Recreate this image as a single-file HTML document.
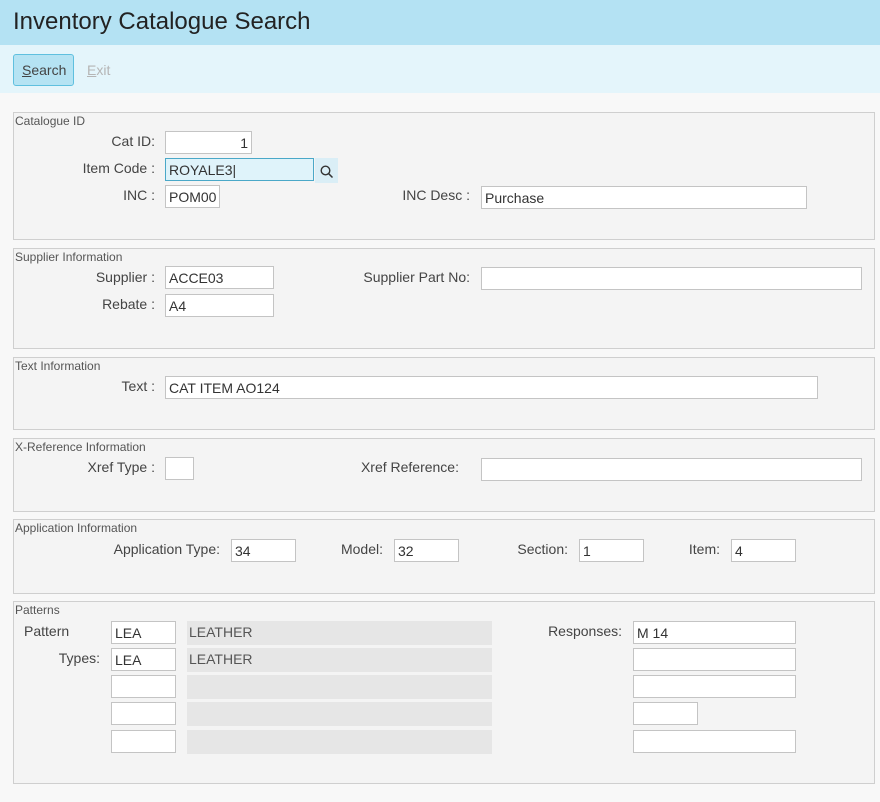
<!DOCTYPE html>
<html><head><style>
*{box-sizing:border-box;margin:0;padding:0}
body{width:880px;height:802px;background:#f8f8f8;font-family:"Liberation Sans",sans-serif;position:relative;overflow:hidden;color:#333}
.a{position:absolute}
.t{position:absolute;font-size:14px;color:#444;white-space:nowrap}
.r{text-align:right}
.i{position:absolute;background:#fff;border:1px solid #c4c4c4;height:23px;font-size:14px;color:#333;padding:3px 0 0 3px;white-space:nowrap}
.g{position:absolute;background:#e6e6e6;height:24px;font-size:14px;color:#555;padding:3px 0 0 2px}
.fs{position:absolute;left:13px;width:862px;background:#f4f4f4;border:1px solid #cfcfcf}
.lg{position:absolute;left:1px;top:1px;font-size:12px;color:#555}
</style></head><body>
<div class="a" style="left:0;top:0;width:880px;height:45px;background:#b4e2f3"></div>
<div class="t" style="left:13px;top:8px;font-size:24px;color:#222">Inventory Catalogue Search</div>
<div class="a" style="left:0;top:45px;width:880px;height:48px;background:#e4f5fb"></div>
<div class="a" style="left:13px;top:54px;width:61px;height:32px;background:#b5e3f3;border:1px solid #5fc0df;border-radius:3px;font-size:14px;color:#444;padding:7px 0 0 8px"><u>S</u>earch</div>
<div class="t" style="left:87px;top:62px;color:#b5b5b5"><u>E</u>xit</div>

<div class="fs" style="top:112px;height:128px"><div class="lg">Catalogue ID</div></div>
<div class="t r" style="left:0;width:155px;top:133px">Cat ID:</div>
<div class="i r" style="left:165px;top:131px;width:87px;padding-right:3px">1</div>
<div class="t r" style="left:0;width:155px;top:160px">Item Code :</div>
<div class="i" style="left:165px;top:158px;width:149px;background:#dff3fa;border-color:#4aa8c8">ROYALE3|</div>
<div class="a" style="left:315px;top:158px;width:23px;height:25px;background:#daeef6"></div>
<svg class="a" style="left:320px;top:165px" width="14" height="14" viewBox="0 0 14 14"><circle cx="5.5" cy="5.5" r="4.3" fill="none" stroke="#333" stroke-width="1.4"/><line x1="8.7" y1="8.7" x2="12.5" y2="12.5" stroke="#333" stroke-width="1.5"/></svg>
<div class="t r" style="left:0;width:155px;top:187px">INC :</div>
<div class="i" style="left:165px;top:185px;width:55px">POM00</div>
<div class="t r" style="left:300px;width:170px;top:187px">INC Desc :</div>
<div class="i" style="left:481px;top:186px;width:326px">Purchase</div>

<div class="fs" style="top:248px;height:101px"><div class="lg">Supplier Information</div></div>
<div class="t r" style="left:0;width:155px;top:269px">Supplier :</div>
<div class="i" style="left:165px;top:266px;width:109px">ACCE03</div>
<div class="t r" style="left:0;width:155px;top:296px">Rebate :</div>
<div class="i" style="left:165px;top:294px;width:109px">A4</div>
<div class="t r" style="left:300px;width:170px;top:269px">Supplier Part No:</div>
<div class="i" style="left:481px;top:267px;width:381px"></div>

<div class="fs" style="top:357px;height:73px"><div class="lg">Text Information</div></div>
<div class="t r" style="left:0;width:155px;top:378px">Text :</div>
<div class="i" style="left:165px;top:376px;width:653px">CAT ITEM AO124</div>

<div class="fs" style="top:438px;height:74px"><div class="lg">X-Reference Information</div></div>
<div class="t r" style="left:0;width:155px;top:459px">Xref Type :</div>
<div class="i" style="left:165px;top:457px;width:29px"></div>
<div class="t r" style="left:300px;width:159px;top:459px">Xref Reference:</div>
<div class="i" style="left:481px;top:458px;width:381px"></div>

<div class="fs" style="top:519px;height:75px"><div class="lg">Application Information</div></div>
<div class="t r" style="left:0;width:220px;top:541px">Application Type:</div>
<div class="i" style="left:231px;top:539px;width:65px">34</div>
<div class="t r" style="left:300px;width:83px;top:541px">Model:</div>
<div class="i" style="left:394px;top:539px;width:65px">32</div>
<div class="t r" style="left:460px;width:108px;top:541px">Section:</div>
<div class="i" style="left:579px;top:539px;width:65px">1</div>
<div class="t r" style="left:650px;width:70px;top:541px">Item:</div>
<div class="i" style="left:731px;top:539px;width:65px">4</div>

<div class="fs" style="top:601px;height:183px"><div class="lg">Patterns</div></div>
<div class="t" style="left:24px;top:623px">Pattern</div>
<div class="t r" style="left:0;width:100px;top:650px">Types:</div>
<div class="i" style="left:111px;top:621px;width:65px">LEA</div>
<div class="i" style="left:111px;top:648px;width:65px">LEA</div>
<div class="i" style="left:111px;top:675px;width:65px"></div>
<div class="i" style="left:111px;top:702px;width:65px"></div>
<div class="i" style="left:111px;top:730px;width:65px"></div>
<div class="g" style="left:187px;top:621px;width:305px">LEATHER</div>
<div class="g" style="left:187px;top:648px;width:305px">LEATHER</div>
<div class="g" style="left:187px;top:675px;width:305px"></div>
<div class="g" style="left:187px;top:702px;width:305px"></div>
<div class="g" style="left:187px;top:730px;width:305px"></div>
<div class="t r" style="left:500px;width:122px;top:623px">Responses:</div>
<div class="i" style="left:633px;top:621px;width:163px">M 14</div>
<div class="i" style="left:633px;top:648px;width:163px"></div>
<div class="i" style="left:633px;top:675px;width:163px"></div>
<div class="i" style="left:633px;top:702px;width:65px"></div>
<div class="i" style="left:633px;top:730px;width:163px"></div>
</body></html>
